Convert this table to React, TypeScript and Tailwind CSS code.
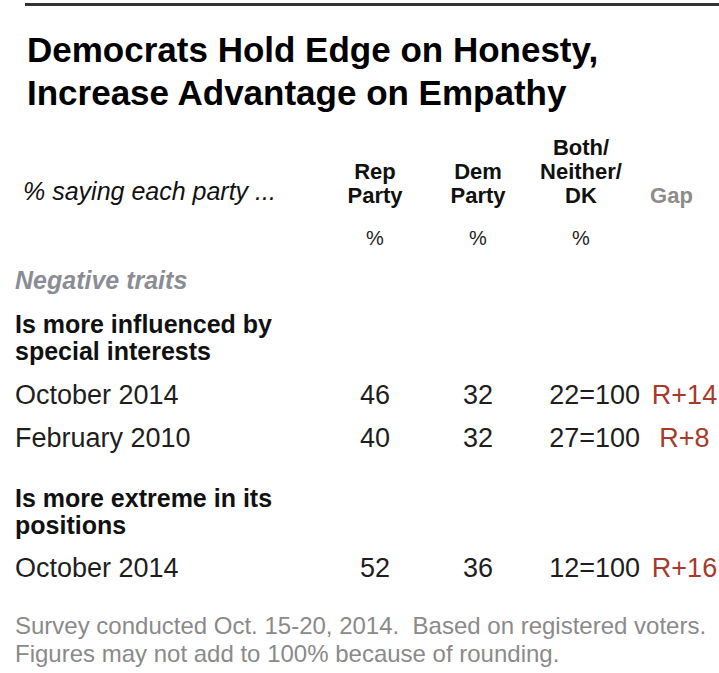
import React from 'react';

const cols = 'grid grid-cols-[332px_86px_120px_102px_79px]';

type Row = { label: string; rep: number; dem: number; both: string; gap: string };

const Section = ({ title, rows, gapTop }: { title: string[]; rows: Row[]; gapTop: string }) => (
  <div>
    <h3 className="pl-[15px] text-[25px] leading-[27px] font-bold text-[#111]">
      {title[0]}
      <br />
      {title[1]}
    </h3>
    <div className={gapTop}>
      {rows.map((r) => (
        <div key={r.label} className={`${cols} h-[43px] items-center text-[27px] text-[#1e1e1e]`}>
          <div className="pl-[15px]">{r.label}</div>
          <div className="text-center">{r.rep}</div>
          <div className="text-center">{r.dem}</div>
          <div className="text-right">{r.both}</div>
          <div className="pl-[10px] text-center text-[#a63a2c]">{r.gap}</div>
        </div>
      ))}
    </div>
  </div>
);

export default function App() {
  return (
    <div className="w-[719px] h-[673px] bg-white font-['Liberation_Sans',Arial,sans-serif] overflow-hidden">
      {/* top rule */}
      <div className="ml-[25px] pt-[3px]">
        <div className="h-[3px] bg-[#333]" />
      </div>

      <h1 className="ml-[27px] mt-[22px] text-[35px] leading-[43px] font-bold text-black">
        Democrats Hold Edge on Honesty,
        <br />
        Increase Advantage on Empathy
      </h1>

      {/* column heads */}
      <div className={`${cols} mt-[22px] items-end font-bold text-[22px] leading-[24px] text-[#111]`}>
        <div className="pl-[23px] pb-[3px] font-normal italic text-[25px] leading-[28px]">
          % saying each party ...
        </div>
        <div className="text-center">Rep<br />Party</div>
        <div className="text-center">Dem<br />Party</div>
        <div className="text-center pr-[16px]">Both/<br />Neither/<br />DK</div>
        <div className="pr-[16px] text-center text-[#8c8c8c]">Gap</div>
      </div>

      <div className={`${cols} mt-[18px] text-[20px] leading-[24px] text-[#222]`}>
        <div />
        <div className="text-center">%</div>
        <div className="text-center">%</div>
        <div className="text-center pr-[16px]">%</div>
        <div />
      </div>

      <div className="mt-[16px] pl-[15px] text-[25px] leading-[28px] italic font-bold text-[#8a8d94]">
        Negative traits
      </div>

      <div className="mt-[17px]">
        <Section
          gapTop="mt-[9px]"
          title={['Is more influenced by', 'special interests']}
          rows={[
            { label: 'October 2014', rep: 46, dem: 32, both: '22=100', gap: 'R+14' },
            { label: 'February 2010', rep: 40, dem: 32, both: '27=100', gap: 'R+8' },
          ]}
        />
      </div>

      <div className="mt-[25px]">
        <Section
          gapTop="mt-[8px]"
          title={['Is more extreme in its', 'positions']}
          rows={[{ label: 'October 2014', rep: 52, dem: 36, both: '12=100', gap: 'R+16' }]}
        />
      </div>

      <p className="mt-[22px] pl-[15px] text-[24px] leading-[28px] text-[#8a8a8a]">
        Survey conducted Oct. 15-20, 2014.&nbsp; Based on registered voters.
        <br />
        Figures may not add to 100% because of rounding.
      </p>
    </div>
  );
}
